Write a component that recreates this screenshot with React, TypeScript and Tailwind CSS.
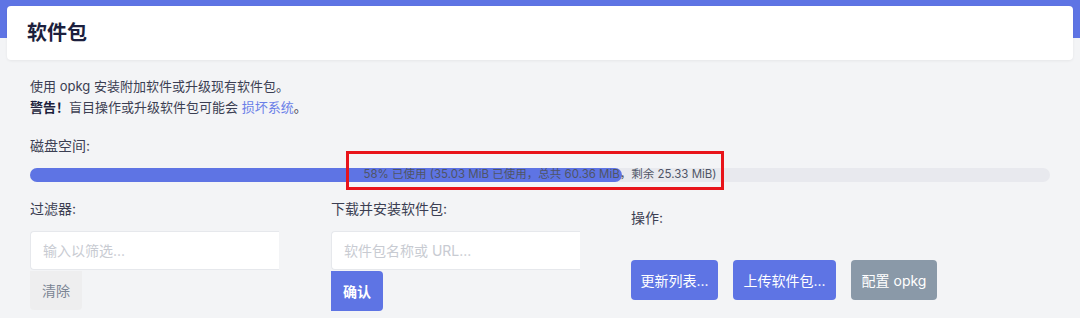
import type { FC } from "react";

const font = { fontFamily: '"Inter", "Noto Sans CJK SC", sans-serif' };

const usedPct = 58;

const App: FC = () => (
	<div
		className="min-h-[318px] w-[1080px] bg-[linear-gradient(#5e74e4_0_38px,#f3f4f6_38px)] text-[#3b3e52]"
		style={font}
	>
		{/* Title card */}
		<div className="px-[7px] pt-[6px]">
			<div className="flex h-[54px] items-center rounded-[4px] bg-white px-[20px] shadow-[0_1px_3px_rgba(0,0,0,0.06)]">
				<h1 className="text-[20px] font-bold text-[#1c1f3d]">软件包</h1>
			</div>
		</div>

		<div className="px-[30px]">
			{/* Description */}
			<div className="mt-[16px] text-[13px] leading-[21px]">
				<p>使用 opkg 安装附加软件或升级现有软件包。</p>
				<p>
					<span className="font-bold text-[#1c1f3d]">警告！</span>
					盲目操作或升级软件包可能会{" "}
					<span className="text-[#6a7fe8]">损坏系统</span>。
				</p>
			</div>

			{/* Disk space */}
			<div className="mt-[18px] text-[14px] leading-[20px]">磁盘空间:</div>
			<div className="relative mt-[12px] h-[14px] w-[1020px] rounded-full bg-[#e8e9ee]">
				<div
					className="h-full rounded-full bg-[#5e74e4]"
					style={{ width: `${usedPct}%` }}
				/>
				<div className="absolute inset-0 flex items-center justify-center text-[11.5px] text-[#4f5566]">
					58% 已使用 (35.03 MiB 已使用，总共 60.36 MiB，剩余 25.33 MiB)
				</div>
				<div className="absolute left-[316px] top-[-17px] h-[39px] w-[378px] border-[3px] border-[#e8141a]" />
			</div>

			{/* Controls */}
			<div className="mt-[17px] flex text-[14px]">
				<div className="w-[301px]">
					<div className="leading-[20px]">过滤器:</div>
					<input
						className="mt-[12px] h-[39px] w-[249px] rounded-l-[4px] border border-r-0 border-[#e6e8ec] bg-white px-[12px] text-[14px] outline-none placeholder:text-[#c8cbd2]"
						placeholder="输入以筛选..."
					/>
					<button className="mt-[1px] block h-[39px] w-[52px] rounded-b-[4px] bg-[#eeeeef] text-[14px] text-[#7b8594]">
						清除
					</button>
				</div>
				<div className="w-[300px]">
					<div className="leading-[20px]">下载并安装软件包:</div>
					<input
						className="mt-[12px] h-[39px] w-[249px] rounded-l-[4px] border border-r-0 border-[#e6e8ec] bg-white px-[12px] text-[14px] outline-none placeholder:text-[#c8cbd2]"
						placeholder="软件包名称或 URL..."
					/>
					<button className="mt-[1px] block h-[40px] w-[52px] rounded-r-[4px] bg-[#5e74e4] text-[14px] font-bold text-white">
						确认
					</button>
				</div>
				<div>
					<div className="mt-[9px] leading-[20px]">操作:</div>
					<div className="mt-[32px] flex gap-[15px]">
						<button className="h-[40px] w-[87px] rounded-[4px] bg-[#5e74e4] text-[14px] text-white">
							更新列表...
						</button>
						<button className="h-[40px] w-[103px] rounded-[4px] bg-[#5e74e4] text-[14px] text-white">
							上传软件包...
						</button>
						<button className="h-[40px] w-[86px] rounded-[4px] bg-[#8a99a8] text-[14px] text-white">
							配置 opkg
						</button>
					</div>
				</div>
			</div>
		</div>
	</div>
);

export default App;
